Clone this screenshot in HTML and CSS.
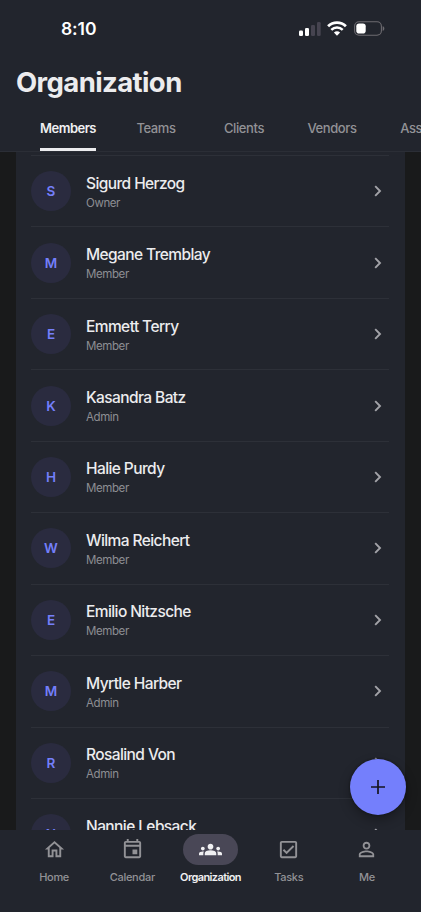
FILE: index.html
```html
<!DOCTYPE html>
<html lang="en">
<head>
<meta charset="utf-8">
<title>Organization</title>
<link rel="stylesheet" href="styles.css">
</head>
<body>
<div class="app">
  <header class="header">
    <div class="status">
      <span class="time">8:10</span>
      <div class="indicators">
        <svg class="signal" width="22" height="14" viewBox="0 0 22 14"><rect x="0" y="8.5" width="4" height="5.5" rx="1.3" fill="#fff"/><rect x="6" y="6" width="4" height="8" rx="1.3" fill="#fff"/><rect x="12" y="3" width="4" height="11" rx="1.3" fill="#464450"/><rect x="18" y="0" width="3.7" height="14" rx="1.3" fill="#464450"/></svg>
        <svg class="wifi" width="20" height="15" viewBox="0 0 20 15" fill="none" stroke="#fff"><path d="M1.1 5.2a12.8 12.8 0 0 1 17.8 0" stroke-width="2.8"/><path d="M4.3 8.9a8.2 8.2 0 0 1 11.4 0" stroke-width="2.5"/><path d="M10 14.7 6.9 11.6a4.5 4.5 0 0 1 6.2 0z" fill="#fff" stroke="none"/></svg>
        <svg class="battery" width="31" height="15" viewBox="0 0 31 15"><rect x=".6" y=".8" width="26.8" height="13.4" rx="4.4" fill="none" stroke="#6d6b70" stroke-width="1.1"/><rect x="2.3" y="2.5" width="9.4" height="10" rx="2.8" fill="#fff"/><path d="M28.7 5.2c2.2.7 2.2 4 0 4.700z" fill="#6d6b70"/></svg>
      </div>
    </div>
    <h1 class="title">Organization</h1>
    <nav class="tabs">
      <a class="tab tab-active"><span>Members</span></a>
      <a class="tab"><span>Teams</span></a>
      <a class="tab"><span>Clients</span></a>
      <a class="tab"><span>Vendors</span></a>
      <a class="tab"><span>Assets</span></a>
    </nav>
  </header>

  <main class="content">
    <ul class="card">
      <li class="row"><span class="avatar">S</span><div class="info"><span class="name">Sigurd Herzog</span><span class="role">Owner</span></div><svg class="chevron" viewBox="0 0 8 12"><path d="M1.2 1.200 6 6 1.200 10.800"/></svg></li>
      <li class="row"><span class="avatar">M</span><div class="info"><span class="name">Megane Tremblay</span><span class="role">Member</span></div><svg class="chevron" viewBox="0 0 8 12"><path d="M1.2 1.200 6 6 1.200 10.800"/></svg></li>
      <li class="row"><span class="avatar">E</span><div class="info"><span class="name">Emmett Terry</span><span class="role">Member</span></div><svg class="chevron" viewBox="0 0 8 12"><path d="M1.2 1.200 6 6 1.200 10.800"/></svg></li>
      <li class="row"><span class="avatar">K</span><div class="info"><span class="name">Kasandra Batz</span><span class="role">Admin</span></div><svg class="chevron" viewBox="0 0 8 12"><path d="M1.2 1.200 6 6 1.200 10.800"/></svg></li>
      <li class="row"><span class="avatar">H</span><div class="info"><span class="name">Halie Purdy</span><span class="role">Member</span></div><svg class="chevron" viewBox="0 0 8 12"><path d="M1.2 1.200 6 6 1.200 10.800"/></svg></li>
      <li class="row"><span class="avatar">W</span><div class="info"><span class="name">Wilma Reichert</span><span class="role">Member</span></div><svg class="chevron" viewBox="0 0 8 12"><path d="M1.2 1.200 6 6 1.200 10.800"/></svg></li>
      <li class="row"><span class="avatar">E</span><div class="info"><span class="name">Emilio Nitzsche</span><span class="role">Member</span></div><svg class="chevron" viewBox="0 0 8 12"><path d="M1.2 1.200 6 6 1.200 10.800"/></svg></li>
      <li class="row"><span class="avatar">M</span><div class="info"><span class="name">Myrtle Harber</span><span class="role">Admin</span></div><svg class="chevron" viewBox="0 0 8 12"><path d="M1.2 1.200 6 6 1.200 10.800"/></svg></li>
      <li class="row"><span class="avatar">R</span><div class="info"><span class="name">Rosalind Von</span><span class="role">Admin</span></div><svg class="chevron" viewBox="0 0 8 12"><path d="M1.2 1.200 6 6 1.200 10.800"/></svg></li>
      <li class="row"><span class="avatar">N</span><div class="info"><span class="name">Nannie Lebsack</span><span class="role">Member</span></div><svg class="chevron" viewBox="0 0 8 12"><path d="M1.2 1.200 6 6 1.200 10.800"/></svg></li>
    </ul>
    <button class="fab" aria-label="Add"><svg width="14" height="14" viewBox="0 0 14 14"><path d="M7 0v14M0 7h14" stroke="#15151f" stroke-width="1.7"/></svg></button>
  </main>

  <nav class="bottom">
    <a class="item"><span class="pill"><svg viewBox="0 0 24 24"><path d="m12 5.690 5 4.500V18h-2v-6H9v6H7v-7.810l5-4.500M12 3 2 12h3v8h6v-6h2v6h6v-8h3L12 3z"/></svg></span><span class="label">Home</span></a>
    <a class="item"><span class="pill"><svg viewBox="0 0 24 24"><path d="M19 3h-1V1h-2v2H8V1H6v2H5c-1.110 0-1.990.9-1.990 2L3 19c0 1.100.89 2 2 2h14c1.100 0 2-.9 2-2V5c0-1.100-.9-2-2-2zm0 16H5V9h14v10zm0-12H5V5h14v2zm-7 5h5v5h-5z"/></svg></span><span class="label">Calendar</span></a>
    <a class="item item-active"><span class="pill"><svg viewBox="0 0 24 24"><path d="M12 12.750c1.630 0 3.070.39 4.240.9 1.080.48 1.760 1.560 1.760 2.730V18H6v-1.610c0-1.180.68-2.260 1.760-2.730 1.170-.52 2.610-.91 4.240-.91zM4 13c1.100 0 2-.9 2-2s-.9-2-2-2-2 .9-2 2 .9 2 2 2zm1.130 1.100C4.760 14.040 4.390 14 4 14c-.99 0-1.930.21-2.780.58C.48 14.900 0 15.620 0 16.430V18h4.500v-1.610c0-.83.23-1.610.63-2.290zM20 13c1.100 0 2-.9 2-2s-.9-2-2-2-2 .9-2 2 .9 2 2 2zm4 3.430c0-.81-.48-1.530-1.220-1.850-.85-.37-1.790-.58-2.780-.58-.39 0-.76.04-1.130.1.400.68.63 1.460.63 2.290V18H24v-1.570zM12 6c1.660 0 3 1.340 3 3s-1.340 3-3 3-3-1.340-3-3 1.340-3 3-3z"/></svg></span><span class="label">Organization</span></a>
    <a class="item"><span class="pill"><svg viewBox="0 0 24 24"><path d="M19 3H5c-1.100 0-2 .9-2 2v14c0 1.100.9 2 2 2h14c1.100 0 2-.9 2-2V5c0-1.100-.9-2-2-2zm0 16H5V5h14v14zM17.990 9l-1.410-1.420-6.590 6.590-2.580-2.570-1.420 1.410 4 3.990z"/></svg></span><span class="label">Tasks</span></a>
    <a class="item"><span class="pill"><svg viewBox="0 0 24 24"><path d="M12 5.900a2.100 2.100 0 1 1 0 4.200 2.100 2.100 0 0 1 0-4.200m0 9c2.970 0 6.100 1.460 6.100 2.100v1.100H5.900V17c0-.64 3.130-2.100 6.100-2.100M12 4C9.790 4 8 5.790 8 8s1.790 4 4 4 4-1.790 4-4-1.790-4-4-4zm0 9c-2.670 0-8 1.340-8 4v3h16v-3c0-2.660-5.330-4-8-4z"/></svg></span><span class="label">Me</span></a>
  </nav>
</div>
</body>
</html>
```
FILE: styles.css
```css
* { box-sizing: border-box; }

body {
  margin: 0;
  background: #22252d;
  font-family: Inter, "Liberation Sans", sans-serif;
  color: #ececee;
}

.app {
  display: flex;
  flex-direction: column;
  width: 421px;
  height: 912px;
  overflow: hidden;
}

.header {
  flex: none;
  height: 152px;
  display: flex;
  flex-direction: column;
  border-bottom: 1px solid #2b2e36;
}

.status {
  display: flex;
  justify-content: space-between;
  height: 58px;
  padding: 18px 36px 0 61px;
}

.time {
  font-size: 17.500px;
  line-height: 22px;
  font-weight: 600;
  letter-spacing: -0.1px;
  color: #fff;
}

.indicators { display: flex; height: 21px; align-items: center; }
.wifi { margin-left: 6px; }
.battery { margin-left: 7px; }

.title {
  margin: 2px 0 0 16px;
  font-size: 27.500px;
  line-height: 46px;
  font-weight: 700;
  letter-spacing: -0.6px;
}

.tabs {
  display: flex;
  flex: 1;
  margin-left: 24px;
}

.tab {
  flex: 0 0 88px;
  display: flex;
  justify-content: center;
  font-size: 13px;
  line-height: 47px;
  font-weight: 500;
  letter-spacing: -0.4px;
  color: #929296;
}

.tab span { height: 46px; }
.tab-active { font-weight: 600; color: #f0f0f2; letter-spacing: -0.5px; }
.tab-active span { border-bottom: 3px solid #ececee; }

.content {
  flex: none;
  height: 678px;
  position: relative;
  overflow: hidden;
  padding: 0 16px;
  background: #191a1b;
}

.card {
  margin: 0;
  padding: 3px 16px 0 15px;
  list-style: none;
  background: #22252d;
}

.row {
  display: flex;
  align-items: center;
  height: 71.450px;
  padding-right: 7px;
  border-top: 1px solid #2d3038;
}

.avatar {
  width: 40px;
  height: 40px;
  border-radius: 50%;
  background: #2a2b3f;
  color: #747ffa;
  font-size: 13.500px;
  line-height: 40px;
  font-weight: 600;
  text-align: center;
}

.info {
  flex: 1;
  display: flex;
  flex-direction: column;
  margin-left: 15px;
  padding-top: 3px;
}

.name {
  font-size: 15.500px;
  line-height: 20px;
  font-weight: 500;
  letter-spacing: -0.59px;
}

.role {
  font-size: 11.500px;
  line-height: 18px;
  letter-spacing: -0.4px;
  color: #8d8e93;
}

.chevron {
  width: 8px;
  height: 12px;
  fill: none;
  stroke: #a3a3a8;
  stroke-width: 1.9;
}

.fab {
  position: absolute;
  right: 15px;
  bottom: 15px;
  width: 56px;
  height: 56px;
  padding: 0;
  display: flex;
  align-items: center;
  justify-content: center;
  border: 0;
  border-radius: 50%;
  background: #747ffc;
  box-shadow: 0 0 2px #111, 0 5px 12px rgba(0, 0, 0, .3);
}

.bottom {
  flex: 1;
  display: flex;
  padding: 4px 15px 0 15px;
}

.item {
  flex: 1;
  display: flex;
  flex-direction: column;
  align-items: center;
  color: #929296;
}

.pill {
  width: 55px;
  height: 31px;
  display: flex;
  align-items: center;
  justify-content: center;
  border-radius: 16px;
}

.pill svg { width: 23px; height: 23px; fill: currentColor; }

.label {
  margin-top: 4px;
  font-size: 11px;
  line-height: 16px;
  font-weight: 500;
  letter-spacing: -0.3px;
}

.item-active { color: #f0f0f2; }
.item-active .pill { background: #494756; }
.item-active .label { font-weight: 600; letter-spacing: -0.6px; }
```
